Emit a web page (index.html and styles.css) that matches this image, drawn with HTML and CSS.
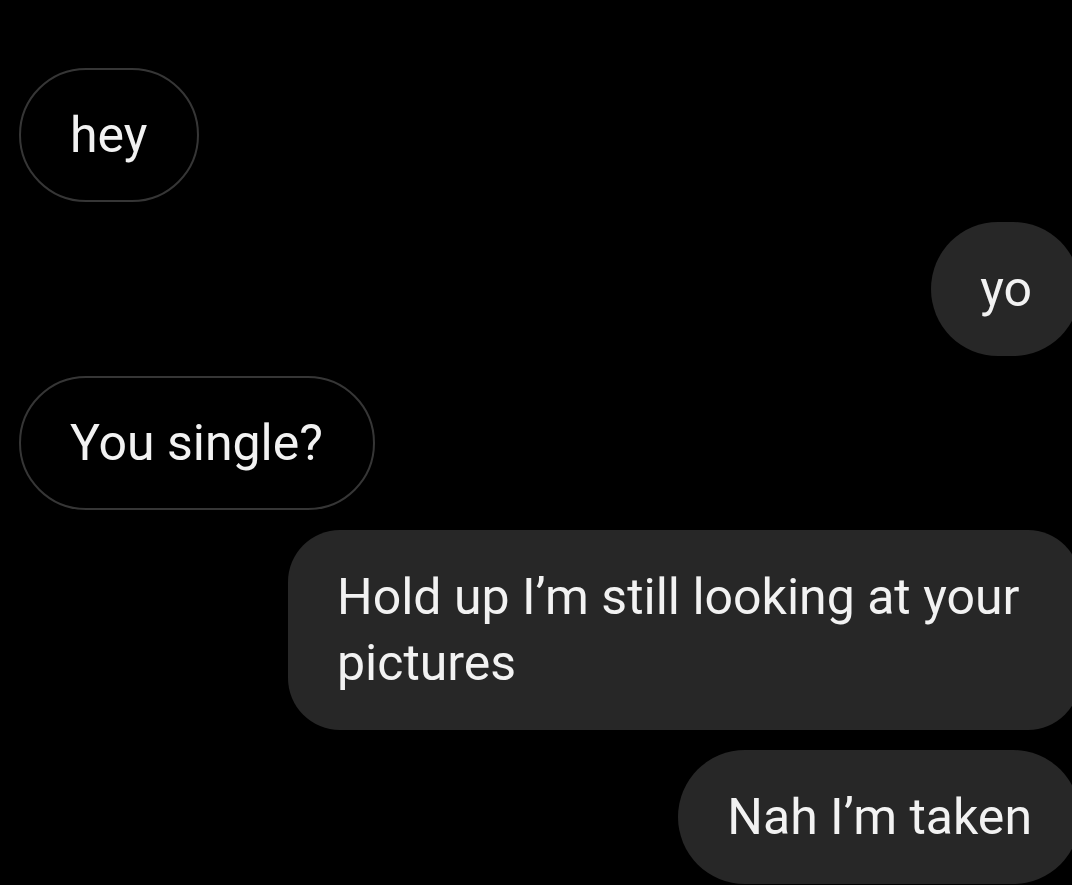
FILE: index.html
```html
<!DOCTYPE html>
<html lang="en">
<head>
<meta charset="utf-8">
<title>Chat</title>
<link rel="stylesheet" href="styles.css">
</head>
<body>
  <main class="thread">
    <div class="msg msg-in">hey</div>
    <div class="msg msg-out">yo</div>
    <div class="msg msg-in">You single?</div>
    <div class="msg msg-out msg-multi">Hold up I’m still looking at your pictures</div>
    <div class="msg msg-out">Nah I’m taken</div>
  </main>
</body>
</html>
```

FILE: styles.css
```css
html, body {
  margin: 0;
  padding: 0;
  background: #000;
}

body {
  width: 1072px;
  height: 885px;
  overflow: hidden;
  font-family: Roboto, "Liberation Sans", Arial, sans-serif;
  color: #f2f2f2;
}

.thread {
  display: flex;
  flex-direction: column;
  gap: 20px;
  padding: 68px 0 0 19px;
}

.msg {
  box-sizing: border-box;
  font-size: 50px;
  line-height: 66px;
  padding: 34px 49px;
  border-radius: 67px;
  max-width: 792px;
  white-space: normal;
}

.msg-in {
  align-self: flex-start;
  background: #000;
  border: 2px solid #363636;
  padding: 32px 50px 32px 49px;
}

.msg-out {
  align-self: flex-end;
  background: #272727;
  margin-right: -8px;
  padding: 34px 48px 34px 49px;
}

.msg-multi {
  border-radius: 52px;
}
```
